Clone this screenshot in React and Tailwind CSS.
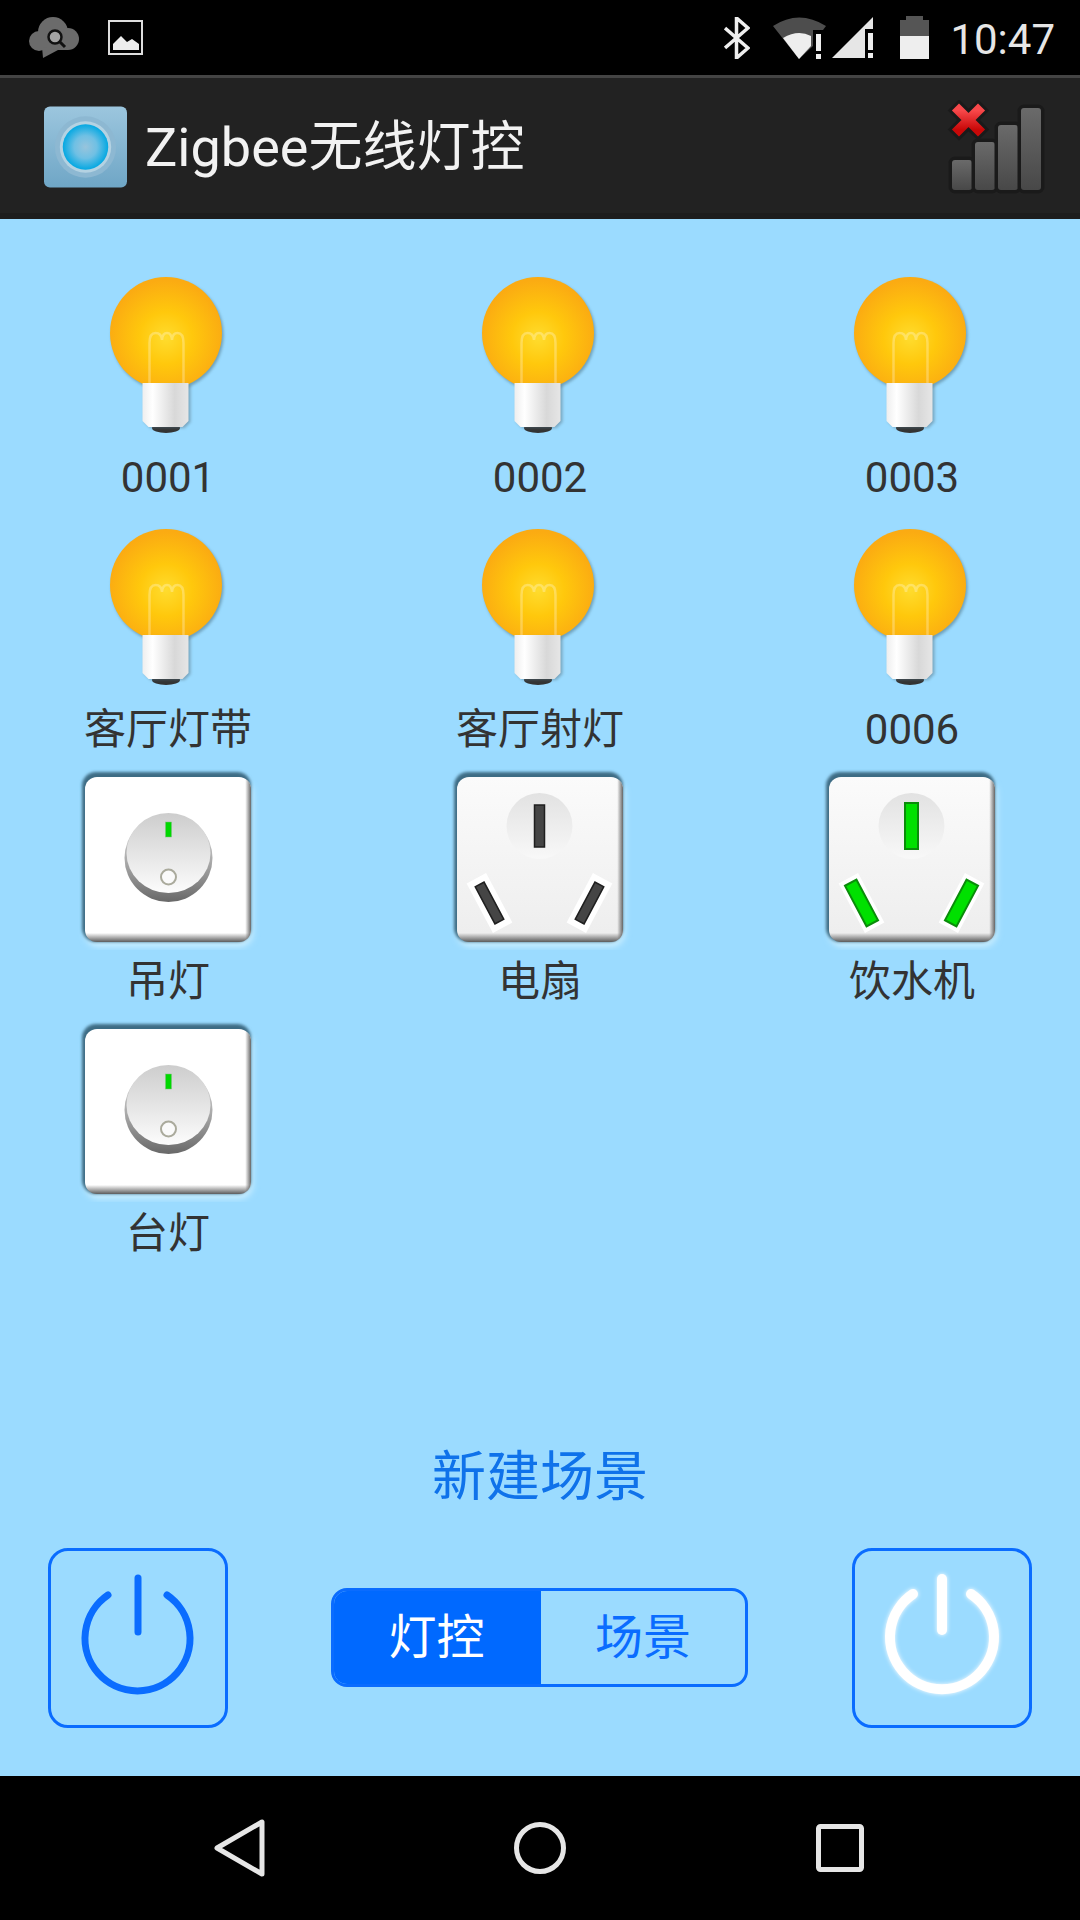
import React from 'react';

const lamps = ['0001', '0002', '0003', '客厅灯带', '客厅射灯', '0006'];

const SharedDefs = () => (
  <svg className="absolute w-0 h-0" aria-hidden="true">
    <defs>
      <radialGradient id="glass" gradientUnits="userSpaceOnUse" cx="99.5" cy="82" r="58">
        <stop offset="0" stopColor="#ffdc2e" />
        <stop offset="0.45" stopColor="#ffc80c" />
        <stop offset="1" stopColor="#fbab12" />
      </radialGradient>
      <linearGradient id="base" x1="0" x2="1" y1="0" y2="0">
        <stop offset="0" stopColor="#eeeeee" />
        <stop offset="0.22" stopColor="#ffffff" />
        <stop offset="0.7" stopColor="#d8d8d8" />
        <stop offset="1" stopColor="#e6e6e6" />
      </linearGradient>
      <linearGradient id="plateWhite" x1="0" x2="0" y1="0" y2="1">
        <stop offset="0" stopColor="#ffffff" />
        <stop offset="0.945" stopColor="#ffffff" />
        <stop offset="1" stopColor="#5c5c5c" />
      </linearGradient>
      <linearGradient id="plateGrey" x1="0" x2="0" y1="0" y2="1">
        <stop offset="0" stopColor="#fbfbfb" />
        <stop offset="0.945" stopColor="#eeeeee" />
        <stop offset="1" stopColor="#5c5c5c" />
      </linearGradient>
      <linearGradient id="plateRight" x1="0" x2="1" y1="0" y2="0">
        <stop offset="0" stopColor="#666666" stopOpacity="0" />
        <stop offset="0.965" stopColor="#666666" stopOpacity="0" />
        <stop offset="1" stopColor="#666666" stopOpacity="1" />
      </linearGradient>
      <linearGradient id="knobEdge" x1="0" x2="0" y1="0" y2="1">
        <stop offset="0" stopColor="#e6e6e6" />
        <stop offset="0.55" stopColor="#a8a8a8" />
        <stop offset="1" stopColor="#686868" />
      </linearGradient>
      <linearGradient id="knobFace" x1="0" x2="0" y1="0" y2="1">
        <stop offset="0" stopColor="#cdcdcd" />
        <stop offset="1" stopColor="#fcfcfc" />
      </linearGradient>
      <linearGradient id="dimple" x1="0" x2="0" y1="0" y2="1">
        <stop offset="0" stopColor="#e2e2e2" />
        <stop offset="1" stopColor="#f8f8f8" />
      </linearGradient>
      <linearGradient id="barFill" x1="0" x2="0" y1="0" y2="1">
        <stop offset="0" stopColor="#6a6a6a" />
        <stop offset="1" stopColor="#484848" />
      </linearGradient>
      <linearGradient id="crossFill" x1="0" x2="0" y1="0" y2="1">
        <stop offset="0" stopColor="#f8484a" />
        <stop offset="1" stopColor="#c80808" />
      </linearGradient>
      <radialGradient id="lens">
        <stop offset="0" stopColor="#98c4dc" />
        <stop offset="0.5" stopColor="#6fc0e4" />
        <stop offset="1" stopColor="#04a8e2" />
      </radialGradient>
      <linearGradient id="appIcon" x1="0" x2="0" y1="0" y2="1">
        <stop offset="0" stopColor="#9cc6de" />
        <stop offset="1" stopColor="#6fa6c6" />
      </linearGradient>
      <filter id="soft" x="-20%" y="-20%" width="140%" height="140%">
        <feGaussianBlur stdDeviation="1.6" />
      </filter>
      <filter id="softer" x="-20%" y="-20%" width="140%" height="140%">
        <feGaussianBlur stdDeviation="3" />
      </filter>
      <filter id="powerGlow" x="-20%" y="-20%" width="140%" height="140%">
        <feGaussianBlur stdDeviation="2" result="b" />
        <feMerge>
          <feMergeNode in="b" />
          <feMergeNode in="SourceGraphic" />
        </feMerge>
      </filter>
    </defs>
  </svg>
);

const Bulb = () => (
  <svg viewBox="1.5 0 200 190" className="w-[200px] h-[190px]">
    <circle cx="101" cy="79" r="56" fill="#4a6f80" opacity="0.55" filter="url(#soft)" />
    <circle cx="99.5" cy="77" r="56" fill="url(#glass)" />
    <path
      d="M83 127V87Q83 77 89 77Q95 77 95.5 84Q96 77 100.5 77Q105 77 105.5 84Q106 77 111 77Q117 77 117 87V127"
      fill="none"
      stroke="#fff"
      strokeOpacity="0.28"
      strokeWidth="2.5"
    />
    <ellipse cx="99.5" cy="172" rx="14" ry="5" fill="#333" />
    <path d="M78 129H124V166L118 172H84L78 166Z" fill="#52707f" opacity="0.5" filter="url(#soft)" />
    <path d="M76 127H122V165L116 171H82L76 165Z" fill="url(#base)" />
  </svg>
);

const Plate = ({ fill, children }) => (
  <svg viewBox="1 0 200 190" className="w-[200px] h-[190px]">
    <rect x="18" y="20" width="168" height="167" rx="14" fill="#c9eeff" filter="url(#softer)" />
    <rect x="15" y="12" width="169" height="170" rx="14" fill="#3d6c84" filter="url(#soft)" />
    <rect x="18" y="17" width="166" height="165" rx="12" fill={fill} />
    <rect x="18" y="17" width="166" height="165" rx="12" fill="url(#plateRight)" />
    {children}
  </svg>
);

const Switch = () => (
  <Plate fill="url(#plateWhite)">
    <circle cx="101.5" cy="98" r="44" fill="url(#knobEdge)" />
    <ellipse cx="101.5" cy="93" rx="42" ry="40" fill="url(#knobFace)" />
    <rect x="98.5" y="62" width="6" height="15" fill="#00d800" stroke="#7fbf7f" strokeWidth="0.5" />
    <circle cx="101.5" cy="117" r="7.5" fill="#fafafa" stroke="#aaaa9c" strokeWidth="2" />
  </Plate>
);

const Slot = ({ x, y, angle, on }) => (
  <g transform={`translate(${x} ${y}) rotate(${angle})`}>
    {angle !== 0 && <rect x="-11" y="-28" width="22" height="56" fill="#ffffff" />}
    {on ? (
      <rect x="-6.5" y="-23" width="13" height="46" fill="#00e000" stroke="#0a8c0a" strokeWidth="2" />
    ) : (
      <rect x="-5" y="-21" width="10" height="42" fill="#454545" stroke="#1f1f1f" strokeWidth="1.5" />
    )}
  </g>
);

const Socket = ({ on }) => (
  <Plate fill="url(#plateGrey)">
    <circle cx="100.5" cy="66" r="33" fill="url(#dimple)" />
    <Slot x={100.5} y={66} angle={0} on={on} />
    <Slot x={50.5} y={143} angle={-28} on={on} />
    <Slot x={150.5} y={143} angle={28} on={on} />
  </Plate>
);

const Cell = ({ label, children }) => (
  <div className="flex flex-col items-center">
    {children}
    <span className="pt-[2px] text-[42px] leading-[60px] text-[#333333]">{label}</span>
  </div>
);

const PowerButton = ({ glow }) => (
  <button className="w-[180px] h-[180px] rounded-[20px] border-[3px] border-[#0a6cff]">
    <svg viewBox="3 3 174 174" className="w-[174px] h-[174px]">
      {glow ? (
        <g fill="none" stroke="#fff" strokeWidth="10" strokeLinecap="round" filter="url(#powerGlow)">
          <path d="M61 46A52 52 0 1 0 119 46" />
          <path d="M90 31V82" />
        </g>
      ) : (
        <g fill="none" stroke="#0a6cff" strokeWidth="7" strokeLinecap="round">
          <path d="M60 47A52.5 52.5 0 1 0 119 47" />
          <path d="M90 30V84" />
        </g>
      )}
    </svg>
  </button>
);

const StatusBar = () => (
  <div className="h-[75px] bg-black flex items-center pl-[29px] pr-[25px]">
    <svg viewBox="0 0 50 41" className="w-[50px] h-[41px]">
      <g fill="#6b6b6b">
        <circle cx="10" cy="24" r="10" />
        <circle cx="24" cy="15" r="15" />
        <circle cx="39" cy="22" r="11" />
        <rect x="10" y="20" width="29" height="13" />
        <path d="M13 30L14 41L29 33Z" />
      </g>
      <circle cx="26" cy="20" r="6.5" fill="#a4a4a4" stroke="#111" strokeWidth="2.5" />
      <path d="M31 25L36 30" stroke="#111" strokeWidth="3" />
    </svg>
    <svg viewBox="0 0 35 35" className="w-[35px] h-[35px] ml-[29px]">
      <rect x="1" y="1" width="33" height="33" fill="none" stroke="#dddddd" strokeWidth="2" />
      <path d="M5 30V24L13 16L19 22L24 19L31 24V30Z" fill="#eeeeee" />
    </svg>
    <svg viewBox="0 0 26 42" className="w-[26px] h-[42px] ml-auto">
      <path d="M1 11L24 31L12.5 41V1L24 11L1 31" fill="none" stroke="#eeeeee" strokeWidth="3.5" />
    </svg>
    <svg viewBox="0 0 53 42" className="w-[53px] h-[42px] ml-[23px]">
      <path d="M0 9Q26 -8 53 9L50 13H40V29L26 42Z" fill="#4d4d4d" />
      <path d="M10 21Q25 12 38 19V29L26 42Z" fill="#eeeeee" />
      <rect x="43" y="17" width="5" height="17" fill="#eeeeee" />
      <rect x="43" y="37" width="5" height="5" fill="#eeeeee" />
    </svg>
    <svg viewBox="0 0 43 41" className="w-[43px] h-[41px] ml-[6px]">
      <path d="M0 41L41 0V12H33V41Z" fill="#e6e6e6" />
      <rect x="36" y="16" width="5" height="17" fill="#eeeeee" />
      <rect x="36" y="36" width="5" height="5" fill="#eeeeee" />
    </svg>
    <svg viewBox="0 0 29 43" className="w-[29px] h-[43px] ml-[25px]">
      <path d="M6 0H23V4H29V20H0V4H6Z" fill="#555555" />
      <rect x="0" y="20" width="29" height="23" fill="#eeeeee" />
    </svg>
    <span className="ml-[21px] mt-[5px] text-[42px] leading-none text-[#e6e6e6]">10:47</span>
  </div>
);

const ActionBar = () => (
  <div className="h-[144px] bg-[#222222] border-t-[3px] border-t-[#444444] border-b-[6px] border-b-[#1d1d1d] flex items-center pl-[44px] pr-[34px]">
    <svg viewBox="0 0 84 82" className="w-[83px] h-[82px] mt-[2px]">
      <rect width="84" height="82" rx="6" fill="url(#appIcon)" />
      <circle cx="42" cy="41" r="31" fill="#8db8d2" />
      <circle cx="42" cy="41" r="26" fill="#b4d2e2" />
      <circle cx="42" cy="41" r="23" fill="url(#lens)" />
    </svg>
    <span className="ml-[18px] mt-[4px] text-[54px] leading-none text-[#f2f2f2]">Zigbee无线灯控</span>
    <svg viewBox="0 0 100 95" className="w-[100px] h-[95px] ml-auto mt-[4px]">
      <g stroke="#1a1a1a" strokeWidth="7" fill="url(#barFill)" paintOrder="stroke">
        <rect x="6" y="60" width="20" height="30" rx="3" />
        <rect x="29" y="42" width="20" height="48" rx="3" />
        <rect x="52" y="25" width="20" height="65" rx="3" />
        <rect x="75" y="8" width="20" height="82" rx="3" />
      </g>
      <g fill="none" strokeLinecap="square">
        <path d="M13 10.5L32 29.5M32 10.5L13 29.5" stroke="#1a1a1a" strokeWidth="16" />
        <path d="M13 10.5L32 29.5M32 10.5L13 29.5" stroke="url(#crossFill)" strokeWidth="10" />
      </g>
    </svg>
  </div>
);

const NavBar = () => (
  <div className="h-[144px] bg-black flex items-center pl-[213px] pr-[215px] justify-between">
    <svg viewBox="0 0 54 60" className="w-[54px] h-[60px]">
      <path d="M49 4V56L4 30Z" fill="none" stroke="#e6e6e6" strokeWidth="5" strokeLinejoin="round" />
    </svg>
    <svg viewBox="0 0 52 52" className="w-[52px] h-[52px] mr-[2px]">
      <circle cx="26" cy="26" r="23.5" fill="none" stroke="#e6e6e6" strokeWidth="5" />
    </svg>
    <svg viewBox="0 0 50 50" className="w-[50px] h-[50px]">
      <rect x="3.5" y="3.5" width="43" height="43" rx="2" fill="none" stroke="#e6e6e6" strokeWidth="5" />
    </svg>
  </div>
);

export default function App() {
  return (
    <div className="w-[1080px] h-[1920px] flex flex-col font-['Roboto','Noto_Sans_CJK_SC',sans-serif]">
      <SharedDefs />
      <StatusBar />
      <ActionBar />
      <main className="flex-1 bg-[#9bdbff] flex flex-col pt-[37px] pb-[48px]">
        <div className="grid grid-cols-[repeat(3,200px)] gap-x-[172px] pl-[68px]">
          {lamps.map((name) => (
            <Cell key={name} label={name}>
              <Bulb />
            </Cell>
          ))}
          <Cell label="吊灯">
            <Switch />
          </Cell>
          <Cell label="电扇">
            <Socket />
          </Cell>
          <Cell label="饮水机">
            <Socket on />
          </Cell>
          <Cell label="台灯">
            <Switch />
          </Cell>
        </div>
        <div className="mt-auto text-center text-[54px] leading-[72px] text-[#0f72ea]">新建场景</div>
        <div className="mt-[34px] flex items-center justify-between px-[48px]">
          <PowerButton />
          <div className="w-[417px] h-[99px] mb-[1px] mr-[1px] flex rounded-[16px] border-[3px] border-[#0a6cff] text-[48px] overflow-hidden">
            <div className="w-[207px] pr-[2px] bg-[#0069ff] text-white flex items-center justify-center">灯控</div>
            <div className="flex-1 text-[#0a6cff] flex items-center justify-center">场景</div>
          </div>
          <PowerButton glow />
        </div>
      </main>
      <NavBar />
    </div>
  );
}
